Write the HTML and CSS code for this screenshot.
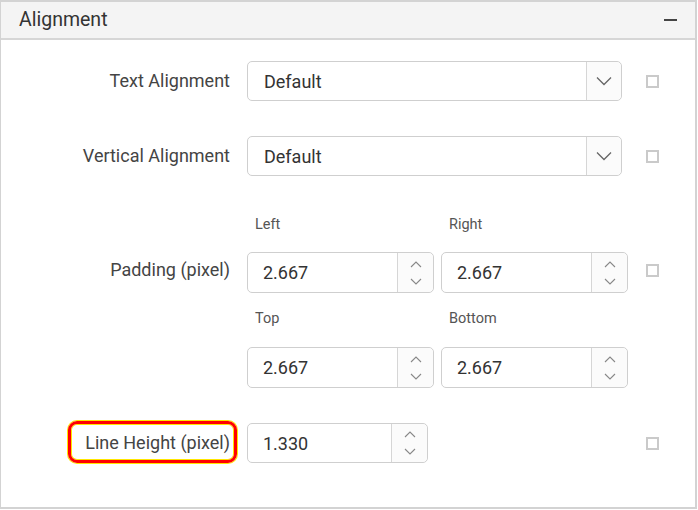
FILE: index.html
```html
<!DOCTYPE html>
<html>
<head>
<meta charset="utf-8">
<link rel="stylesheet" href="styles.css">
</head>
<body>
<div class="panel">
  <div class="panel-header">
    <span class="panel-title">Alignment</span>
    <span class="collapse-icon"></span>
  </div>
  <div class="panel-body">
    <div class="row row-first">
      <div class="label">Text Alignment</div>
      <div class="control">
        <div class="dropdown">
          <span class="dropdown-value">Default</span>
          <span class="dropdown-arrow"><svg width="16" height="10" viewBox="0 0 16 10"><path d="M1 1.5 L8 8.5 L15 1.5" fill="none" stroke="#666" stroke-width="1.3"/></svg></span>
        </div>
      </div>
      <div class="check"></div>
    </div>
    <div class="row row-gap">
      <div class="label">Vertical Alignment</div>
      <div class="control">
        <div class="dropdown">
          <span class="dropdown-value">Default</span>
          <span class="dropdown-arrow"><svg width="16" height="10" viewBox="0 0 16 10"><path d="M1 1.5 L8 8.5 L15 1.5" fill="none" stroke="#666" stroke-width="1.3"/></svg></span>
        </div>
      </div>
      <div class="check"></div>
    </div>
    <div class="row row-padding">
      <div class="label label-padding">Padding (pixel)</div>
      <div class="control">
        <div class="pad-grid">
          <div class="sub-label">Left</div>
          <div class="sub-label">Right</div>
          <div class="numeric"><span class="num-value">2.667</span><span class="spin"><svg width="12" height="26" viewBox="0 0 12 26"><path d="M1 7 L6 2 L11 7" fill="none" stroke="#888" stroke-width="1.1"/><path d="M1 19 L6 24 L11 19" fill="none" stroke="#888" stroke-width="1.1"/></svg></span></div>
          <div class="numeric"><span class="num-value">2.667</span><span class="spin"><svg width="12" height="26" viewBox="0 0 12 26"><path d="M1 7 L6 2 L11 7" fill="none" stroke="#888" stroke-width="1.1"/><path d="M1 19 L6 24 L11 19" fill="none" stroke="#888" stroke-width="1.1"/></svg></span></div>
          <div class="sub-label sub-label-2">Top</div>
          <div class="sub-label sub-label-2">Bottom</div>
          <div class="numeric"><span class="num-value">2.667</span><span class="spin"><svg width="12" height="26" viewBox="0 0 12 26"><path d="M1 7 L6 2 L11 7" fill="none" stroke="#888" stroke-width="1.1"/><path d="M1 19 L6 24 L11 19" fill="none" stroke="#888" stroke-width="1.1"/></svg></span></div>
          <div class="numeric"><span class="num-value">2.667</span><span class="spin"><svg width="12" height="26" viewBox="0 0 12 26"><path d="M1 7 L6 2 L11 7" fill="none" stroke="#888" stroke-width="1.1"/><path d="M1 19 L6 24 L11 19" fill="none" stroke="#888" stroke-width="1.1"/></svg></span></div>
        </div>
      </div>
      <div class="check check-padding"></div>
    </div>
    <div class="row row-gap">
      <div class="label"><span class="highlight">Line Height (pixel)</span></div>
      <div class="control">
        <div class="numeric numeric-short"><span class="num-value">1.330</span><span class="spin"><svg width="12" height="26" viewBox="0 0 12 26"><path d="M1 7 L6 2 L11 7" fill="none" stroke="#888" stroke-width="1.1"/><path d="M1 19 L6 24 L11 19" fill="none" stroke="#888" stroke-width="1.1"/></svg></span></div>
      </div>
      <div class="check"></div>
    </div>
  </div>
</div>
</body>
</html>
```

FILE: styles.css
```css
* { box-sizing: border-box; }
html, body { margin: 0; padding: 0; background: #ffffff; }
body { font-family: Roboto, "Liberation Sans", sans-serif; color: #333; }

.panel {
  width: 697px;
  height: 509px;
  border-top: 2px solid #d3d3d3;
  border-left: 1px solid #d3d3d3;
  border-right: 2px solid #d3d3d3;
  border-bottom: 2px solid #d3d3d3;
  display: flex;
  flex-direction: column;
}

.panel-header {
  height: 38px;
  background: #f4f4f4;
  border-bottom: 2px solid #d6d6d6;
  display: flex;
  align-items: center;
  justify-content: space-between;
  padding: 0 18px 0 18px;
  flex-shrink: 0;
}
.panel-title {
  font-size: 19.5px;
  color: #333;
  margin-top: -1px;
}
.collapse-icon {
  width: 13px;
  height: 2px;
  background: #444;
  margin-top: -1px;
}

.panel-body {
  flex: 1;
  padding-top: 21px;
}

.row {
  display: flex;
  align-items: center;
}
.row-gap { margin-top: 35px; }
.row-padding { align-items: flex-start; margin-top: 39px; }

.label {
  width: 229px;
  text-align: right;
  font-size: 18px;
  line-height: 20px;
  color: #444;
  margin-right: 17px;
  flex-shrink: 0;
}
.label-padding { margin-top: 45px; }

.control {
  width: 382px;
  flex-shrink: 0;
}

.check {
  width: 13px;
  height: 13px;
  border: 2px solid #cacaca;
  margin-left: 17px;
  flex-shrink: 0;
}
.check-padding { margin-top: 49px; }

.dropdown {
  width: 375px;
  height: 40px;
  border: 1px solid #cfcfcf;
  border-radius: 5px;
  display: flex;
  align-items: center;
}
.dropdown-value {
  flex: 1;
  padding-left: 16px;
  font-size: 18px;
  color: #333;
}
.dropdown-arrow {
  width: 35px;
  height: 100%;
  border-left: 1px solid #d6d6d6;
  display: flex;
  align-items: center;
  justify-content: center;
  background: #fbfbfb;
  border-radius: 0 5px 5px 0;
}

.pad-grid {
  display: grid;
  grid-template-columns: 187px 187px;
  column-gap: 7px;
}
.sub-label {
  font-size: 14.5px;
  line-height: 20px;
  color: #555;
  padding-left: 8px;
  margin-bottom: 17px;
}
.sub-label-2 { margin-top: 16px; margin-bottom: 18px; }

.numeric {
  height: 41px;
  border: 1px solid #cfcfcf;
  border-radius: 5px;
  display: flex;
  align-items: center;
}
.numeric-short { width: 181px; height: 40px; }
.num-value {
  flex: 1;
  padding-left: 15px;
  font-size: 18px;
  color: #333;
}
.spin {
  width: 36px;
  height: 100%;
  border-left: 1px solid #d6d6d6;
  display: flex;
  align-items: center;
  justify-content: center;
  background: #fbfbfb;
  border-radius: 0 5px 5px 0;
}

.highlight {
  position: relative;
  display: inline-block;
}
.highlight::after {
  content: "";
  position: absolute;
  left: -17px;
  right: -7px;
  top: -12px;
  bottom: -10px;
  border: 3px solid #ff0000;
  border-radius: 9px;
  box-shadow: 0 0 0 1px #ffe600, inset 0 0 0 1px #ffe600;
}
```
